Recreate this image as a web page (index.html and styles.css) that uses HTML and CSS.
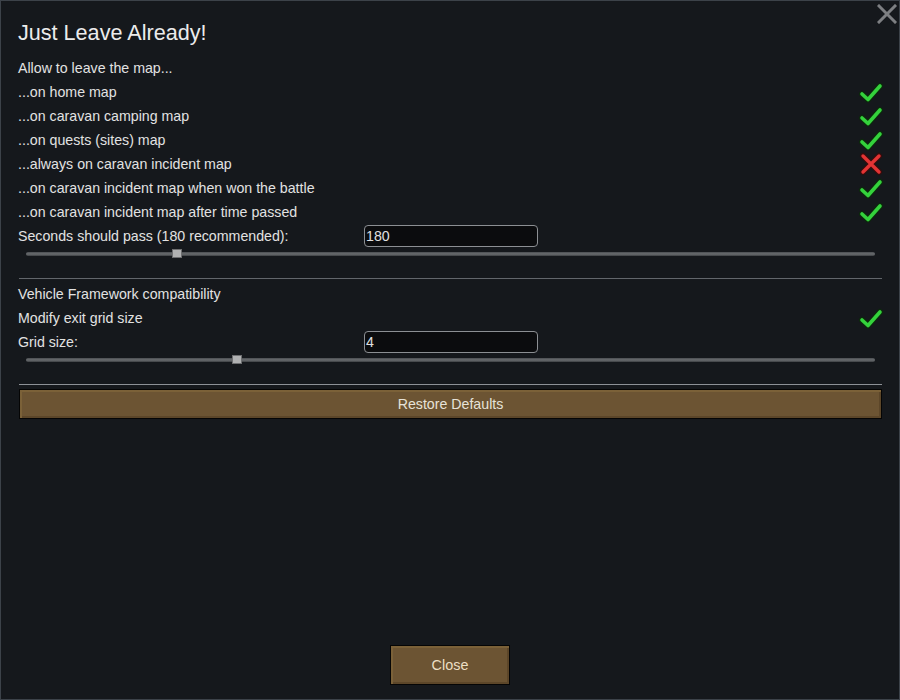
FILE: index.html
```html
<!DOCTYPE html>
<html>
<head>
<meta charset="utf-8">
<link rel="stylesheet" href="styles.css">
</head>
<body>
<div class="window">
  <button class="close-x" aria-label="close">
    <svg width="20" height="20" viewBox="0 0 20 20"><path d="M2 2 L18 18 M18 2 L2 18" stroke="#7d7f82" stroke-width="3" stroke-linecap="square"/></svg>
  </button>
  <div class="content">
    <h1 class="title">Just Leave Already!</h1>
    <div class="row"><span>Allow to leave the map...</span></div>
    <div class="row"><span>...on home map</span><span class="check on"></span></div>
    <div class="row"><span>...on caravan camping map</span><span class="check on"></span></div>
    <div class="row"><span>...on quests (sites) map</span><span class="check on"></span></div>
    <div class="row"><span>...always on caravan incident map</span><span class="check off"></span></div>
    <div class="row"><span>...on caravan incident map when won the battle</span><span class="check on"></span></div>
    <div class="row"><span>...on caravan incident map after time passed</span><span class="check on"></span></div>
    <div class="row field-row"><span class="label">Seconds should pass (180 recommended):</span><div class="field">180</div></div>
    <div class="slider"><div class="track"></div><div class="thumb" style="left:146px"></div></div>
    <div class="sep"></div>
    <div class="row"><span>Vehicle Framework compatibility</span></div>
    <div class="row"><span>Modify exit grid size</span><span class="check on"></span></div>
    <div class="row field-row"><span class="label">Grid size:</span><div class="field">4</div></div>
    <div class="slider"><div class="track"></div><div class="thumb" style="left:206px"></div></div>
    <div class="sep sep2"></div>
    <div class="btn restore">Restore Defaults</div>
    <div class="spacer"></div>
    <div class="footer"><div class="btn close">Close</div></div>
  </div>
</div>
</body>
</html>
```

FILE: styles.css
```css
html, body {
  margin: 0;
  padding: 0;
  background: #15181c;
}
.window {
  position: relative;
  width: 900px;
  height: 700px;
  box-sizing: border-box;
  border: 1px solid #3c4249;
  background: #15181c;
  font-family: "Liberation Sans", Arial, sans-serif;
  color: #e2e2e2;
  font-size: 14.2px;
}
.close-x {
  position: absolute;
  top: 3px;
  right: 2px;
  width: 20px;
  height: 20px;
  padding: 0;
  border: 0;
  background: none;
}
.content {
  display: flex;
  flex-direction: column;
  height: 100%;
  box-sizing: border-box;
  padding: 17px 17px 14px 17px;
}
.title {
  margin: 0 0 8px 0;
  font-weight: normal;
  font-size: 21.6px;
  line-height: 30px;
  color: #ececec;
}
.row {
  height: 24px;
  display: flex;
  align-items: center;
  justify-content: space-between;
  line-height: 24px;
}
.check {
  width: 24px;
  height: 24px;
  margin-right: -1px;
  background-repeat: no-repeat;
  background-position: center;
}
.check.on {
  background-image: url("data:image/svg+xml,%3Csvg xmlns='http://www.w3.org/2000/svg' width='24' height='24' viewBox='0 0 24 24'%3E%3Cpath d='M3 14 L9 19.5 L21 6' fill='none' stroke='%230c2a0c' stroke-width='6' stroke-linecap='round' stroke-linejoin='round'/%3E%3Cpath d='M3 14 L9 19.5 L21 6' fill='none' stroke='%2334d23c' stroke-width='3.6' stroke-linecap='round' stroke-linejoin='round'/%3E%3C/svg%3E");
}
.check.off {
  background-image: url("data:image/svg+xml,%3Csvg xmlns='http://www.w3.org/2000/svg' width='24' height='24' viewBox='0 0 24 24'%3E%3Cpath d='M4 4 L20 20 M20 4 L4 20' fill='none' stroke='%23360c0c' stroke-width='6' stroke-linecap='round'/%3E%3Cpath d='M4 4 L20 20 M20 4 L4 20' fill='none' stroke='%23e23434' stroke-width='3.4' stroke-linecap='round'/%3E%3C/svg%3E");
}
.field-row {
  justify-content: flex-start;
}
.field-row .label {
  width: 346px;
}
.field {
  width: 171px;
  height: 20px;
  box-sizing: content-box;
  border: 1px solid #8c8f93;
  border-radius: 4px;
  background: #0b0c0e;
  line-height: 20px;
  padding: 0 0 0 1px;
  color: #e0e0e0;
}
.slider {
  position: relative;
  height: 12px;
  margin: 0 7px 0 8px;
}
.track {
  position: absolute;
  left: 0;
  right: 0;
  top: 4px;
  height: 4px;
  border-radius: 2px;
  background: linear-gradient(#4a4d51, #6a6d70 50%, #3c3f42);
}
.thumb {
  position: absolute;
  top: 1px;
  width: 10px;
  height: 9px;
  background: #b0b1b2;
  border: 1px solid #6d6e70;
  box-sizing: border-box;
}
.sep {
  height: 1px;
  background: #62666b;
  margin: 18px 0 3px 1px;
}
.sep2 {
  background: #8d9196;
  margin: 18px 0 4px 1px;
}
.btn {
  box-sizing: border-box;
  border: 1px solid #050505;
  background: #6c5433;
  box-shadow: inset 2px 2px 0 #7b6138, inset -2px -2px 0 #5c4629;
  color: #e6e2d8;
  text-align: center;
}
.restore {
  height: 30px;
  line-height: 28px;
  margin-left: 1px;
}
.spacer {
  flex: 1;
}
.footer {
  display: flex;
  justify-content: center;
}
.close {
  width: 120px;
  height: 40px;
  line-height: 38px;
  font-size: 14.4px;
  color: #ecdfc4;
}
```
